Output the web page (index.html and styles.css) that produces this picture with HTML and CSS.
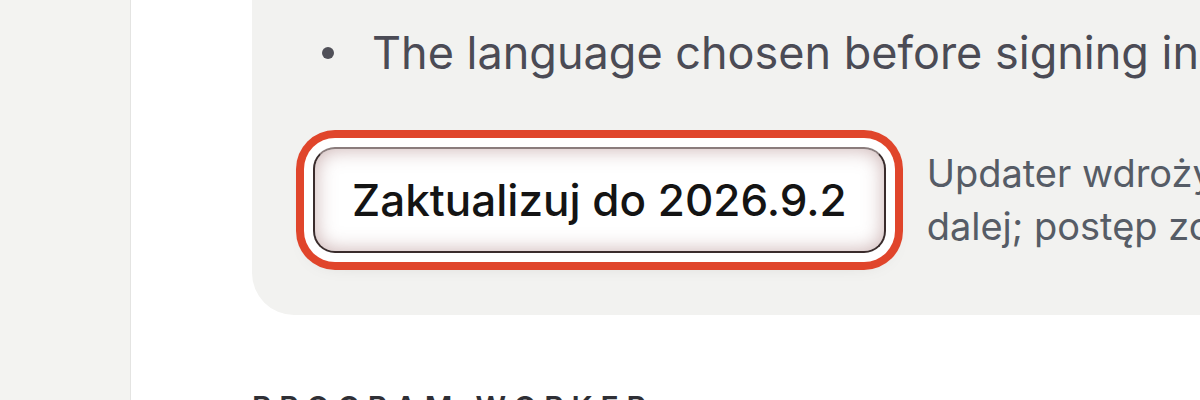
FILE: index.html
```html
<!DOCTYPE html>
<html lang="pl">
<head>
   <meta charset="UTF-8">
   <meta name="viewport" content="width=device-width">
   <title>Aktualizacja</title>
   <link rel="stylesheet" href="styles.css">
</head>
<body>
   <aside class="sidebar"></aside>

   <main class="main">
       <div class="card">
           <ul class="notes">
               <li>The language chosen before signing in is kept for this device</li>
           </ul>

           <div class="update-row">
               <button class="update-btn">Zaktualizuj do 2026.9.2</button>
               <p class="update-desc">Updater wdroży nową wersję w tle, możesz pracować<br>dalej; postęp zobaczysz w tym panelu.</p>
           </div>
       </div>

       <h2 class="section-title">Program worker</h2>
   </main>
</body>
</html>
```

FILE: styles.css
```css
body {
    margin: 0;
    display: flex;
    height: 400px;
    overflow: hidden;
    background-color: #ffffff;
    font-family: Inter, "Noto Sans", sans-serif;
}
.sidebar {
    flex: 0 0 130px;
    background-color: #f3f3f1;
    border-right: 1px solid #e4e4e2;
}
.main {
    flex: 1;
    min-width: 0;
    padding-left: 121px;
    overflow: hidden;
}
.card {
    width: 1400px;
    background-color: #f2f2f0;
    border-radius: 0 0 0 42px;
    padding: 23px 0 62px 0;
}
.notes {
    list-style: none;
    margin: 0;
    padding: 0 0 0 70px;
}
.notes li {
    display: flex;
    align-items: center;
    gap: 38px;
    font-size: 45px;
    line-height: 60px;
    color: #4b4b55;
    white-space: nowrap;
}
.notes li::before {
    content: "";
    flex: 0 0 12px;
    height: 12px;
    border-radius: 50%;
    background-color: #505058;
}
.update-row {
    display: flex;
    align-items: center;
    gap: 41px;
    margin-top: 64px;
    padding-left: 61px;
}
.update-btn {
    flex: 0 0 auto;
    font-family: Inter, "Noto Sans", sans-serif;
    font-size: 44px;
    font-weight: 500;
    line-height: 48px;
    color: #141414;
    background-color: #ffffff;
    padding: 27px 37px;
    border: 2px solid #3a2c2c;
    border-top-color: #8a7c7c;
    border-radius: 22px;
    box-shadow:
        inset 0 0 20px rgba(150, 95, 95, 0.5),
        0 0 0 9px #ffffff,
        0 0 0 17px #e0452b,
        0 6px 22px rgba(0, 0, 0, 0.22);
}
.update-desc {
    margin: 0;
    font-size: 38px;
    line-height: 53px;
    color: #565c66;
    white-space: nowrap;
}
.section-title {
    margin: 74px 0 0 0;
    font-size: 30px;
    font-weight: 600;
    letter-spacing: 0.26em;
    text-transform: uppercase;
    color: #2f2f35;
}
```
